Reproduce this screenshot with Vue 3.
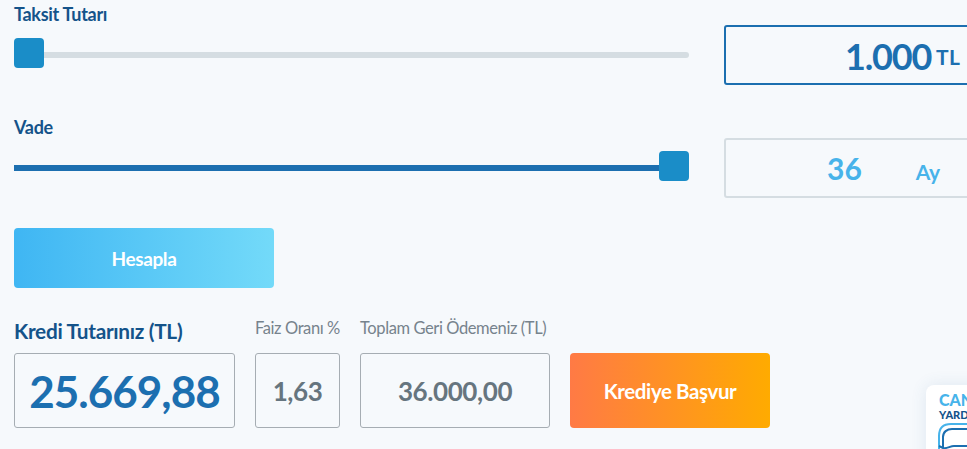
<script setup>
const results = [
  { label: 'Faiz Oranı %', value: '1,63', width: '85px' },
  { label: 'Toplam Geri Ödemeniz (TL)', value: '36.000,00', width: '190px' }
]
</script>

<template>
  <main class="calc">
    <section class="row first">
      <div class="slider-col">
        <label class="title">Taksit Tutarı</label>
        <div class="slider">
          <div class="track"></div>
          <div class="thumb"></div>
        </div>
      </div>
      <div class="amount active">
        <span class="num">1.000</span><span class="unit">TL</span>
      </div>
    </section>

    <section class="row second">
      <div class="slider-col">
        <label class="title">Vade</label>
        <div class="slider full">
          <div class="track"></div>
          <div class="thumb"></div>
        </div>
      </div>
      <div class="amount muted">
        <span class="num">36</span><span class="unit">Ay</span>
      </div>
    </section>

    <button class="btn hesapla">Hesapla</button>

    <section class="results">
      <div class="result">
        <div class="title big">Kredi Tutarınız (TL)</div>
        <div class="box main">25.669,88</div>
      </div>
      <div v-for="item in results" :key="item.label" class="result">
        <div class="small">{{ item.label }}</div>
        <div class="box" :style="{ width: item.width }">{{ item.value }}</div>
      </div>
      <button class="btn apply">Krediye Başvur</button>
    </section>

    <aside class="helper">
      <div class="can">CAN</div>
      <div class="yard">YARDIMCI</div>
      <svg width="60" height="30" viewBox="0 0 60 30" fill="none">
        <path d="M1 30V14C1 6 5 2 13 2H60" stroke="#47b3ea" stroke-width="2"/>
        <path d="M5 26V15C5 10 9 7 14 7H60" stroke="#1c6fb0" stroke-width="2"/>
        <path d="M1 24L5 26C9 27 12 24 16 24H60" stroke="#1c6fb0" stroke-width="2"/>
      </svg>
    </aside>
  </main>
</template>

<style scoped>
.calc {
  position: relative;
  width: 967px;
  height: 449px;
  box-sizing: border-box;
  padding: 0 0 0 14px;
  overflow: hidden;
  background: #f6f9fc;
  font-family: "Lato", "Open Sans", sans-serif;
}

/* slider rows */
.row {
  display: flex;
  gap: 35px;
  width: 970px;
}
.first {
  height: 138px;
}
.second {
  height: 90px;
}
.slider-col {
  width: 675px;
  flex-shrink: 0;
}
.title {
  display: block;
  height: 20px;
  color: #14538a;
  font-size: 18px;
  font-weight: 700;
  line-height: 20px;
  letter-spacing: -0.3px;
}
.first .title {
  margin-top: 4px;
}
.second .title {
  margin-top: -21px;
}
.slider {
  position: relative;
  height: 30px;
  margin-top: 14px;
  display: flex;
  align-items: center;
}
.track {
  width: 100%;
  height: 6px;
  margin-top: 4px;
  border-radius: 3px;
  background: #d5dde2;
}
.full .track {
  background: #1c6fb0;
  border-radius: 0;
}
.thumb {
  position: absolute;
  left: 0;
  top: 0;
  width: 30px;
  height: 30px;
  border-radius: 4px;
  background: #1a8dc8;
}
.full .thumb {
  left: auto;
  right: 0;
}

/* value boxes */
.amount {
  width: 260px;
  height: 60px;
  box-sizing: border-box;
  flex-shrink: 0;
  display: flex;
  align-items: center;
  border-radius: 3px;
}
.active {
  margin-top: 25px;
  border: 2px solid #1c6fb0;
  padding: 2px 0 0 119px;
  color: #1c6fb0;
}
.active .num {
  font-size: 36px;
  font-weight: 700;
  letter-spacing: -1.2px;
}
.active .unit {
  margin-left: 5px;
  font-size: 21px;
  font-weight: 700;
  letter-spacing: 0.3px;
}
.muted {
  border: 2px solid #d5dde2;
  padding-left: 101px;
  color: #47b3ea;
}
.muted .num {
  font-size: 30px;
  font-weight: 700;
}
.muted .unit {
  margin-left: 54px;
  margin-top: 6px;
  font-size: 21px;
  font-weight: 700;
  letter-spacing: -0.5px;
}

/* buttons */
.btn {
  display: block;
  border: 0;
  border-radius: 4px;
  color: #fff;
  font-family: inherit;
  font-weight: 700;
  letter-spacing: -0.4px;
}
.hesapla {
  width: 260px;
  height: 60px;
  padding: 0;
  background: linear-gradient(90deg, #3fb6f3, #73daf9);
  font-size: 19px;
}
.apply {
  width: 200px;
  height: 75px;
  padding: 0;
  background: linear-gradient(90deg, #ff7a45, #ffab00);
  font-size: 20.5px;
}

/* result row */
.results {
  display: flex;
  align-items: flex-end;
  gap: 20px;
  margin-top: 30px;
}
.result {
  display: flex;
  flex-direction: column;
}
.big {
  font-size: 20.8px;
  height: 25px;
  margin-bottom: 10px;
  line-height: 25px;
}
.small {
  height: 20px;
  margin-bottom: 15px;
  color: #76838d;
  font-size: 16.5px;
  line-height: 20px;
  letter-spacing: -0.4px;
  white-space: nowrap;
}
.box {
  height: 75px;
  box-sizing: border-box;
  display: flex;
  align-items: center;
  justify-content: center;
  border: 1px solid #a6adb3;
  border-radius: 3px;
  color: #66757f;
  font-size: 26px;
  font-weight: 700;
  letter-spacing: -0.4px;
}
.main {
  width: 221px;
  color: #1c6fb0;
  font-size: 44px;
  letter-spacing: -1px;
}

/* floating helper card */
.helper {
  position: absolute;
  left: 926px;
  top: 385px;
  width: 80px;
  height: 90px;
  padding: 7px 0 0 13px;
  box-sizing: border-box;
  border-radius: 8px;
  background: #fff;
  box-shadow: 0 0 16px rgba(60, 110, 160, 0.12);
  overflow: hidden;
}
.can {
  color: #47b3ea;
  font-size: 16px;
  font-weight: 900;
  line-height: 16px;
  margin-bottom: 1px;
}
.yard {
  color: #14538a;
  font-size: 11px;
  font-weight: 900;
  line-height: 12px;
}
.helper svg {
  display: block;
  margin: 1px 0 0 -1px;
}
</style>

<style>
html, body {
  margin: 0;
  overflow: hidden;
}
</style>
